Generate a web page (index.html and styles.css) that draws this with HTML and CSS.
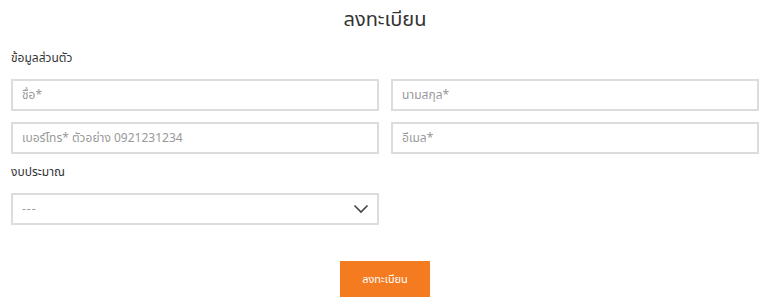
FILE: index.html
```html
<!DOCTYPE html>
<html lang="th">
<head>
<meta charset="utf-8">
<link rel="stylesheet" href="styles.css">
</head>
<body>
<form class="reg">
  <h1 class="reg-title">ลงทะเบียน</h1>
  <div class="section-label">ข้อมูลส่วนตัว</div>
  <div class="grid">
    <input class="field" type="text" placeholder="ชื่อ*">
    <input class="field" type="text" placeholder="นามสกุล*">
    <input class="field" type="text" placeholder="เบอร์โทร* ตัวอย่าง 0921231234">
    <input class="field" type="text" placeholder="อีเมล*">
  </div>
  <div class="section-label budget">งบประมาณ</div>
  <div class="grid">
    <div class="select">
      <span class="select-value">---</span>
      <svg class="chev" width="16" height="10" viewBox="0 0 16 10"><path d="M1.5 1.5 L8 8 L14.5 1.5" fill="none" stroke="#444" stroke-width="1.6"/></svg>
    </div>
  </div>
  <div class="actions">
    <button class="btn" type="button">ลงทะเบียน</button>
  </div>
</form>
</body>
</html>
```
FILE: styles.css
```css
html, body {
  margin: 0;
  padding: 0;
  background: #fff;
}
body {
  font-family: "Noto Sans Thai", "Noto Sans", "Liberation Sans", sans-serif;
  color: #333;
}
.reg {
  padding: 0 9px 0 11px;
}
.reg-title {
  margin: 0;
  height: 40px;
  line-height: 40px;
  text-align: center;
  font-size: 20px;
  font-weight: 400;
  color: #333;
}
.section-label {
  font-size: 12px;
  line-height: 18px;
  margin-top: 9px;
  height: 18px;
  color: #333;
}
.budget {
  margin-top: 9px;
}
.grid {
  display: grid;
  grid-template-columns: 1fr 1fr;
  column-gap: 12px;
  row-gap: 11px;
  margin-top: 12px;
}
.budget + .grid {
  margin-top: 12px;
}
.field, .select {
  box-sizing: border-box;
  height: 32px;
  border: 2px solid #dcdcdc;
  padding: 0 9px;
  font-family: inherit;
  font-size: 12px;
  color: #333;
  background: #fff;
  outline: none;
  margin: 0;
  width: 100%;
}
.field::placeholder {
  color: #999;
}
.select {
  display: flex;
  align-items: center;
  justify-content: space-between;
  padding-right: 8px;
}
.select-value {
  color: #999;
  font-size: 12px;
  letter-spacing: 1px;
}
.actions {
  display: flex;
  justify-content: center;
  margin-top: 36px;
}
.btn {
  width: 90px;
  height: 36px;
  border: none;
  background: #f47b20;
  color: #fff;
  font-family: inherit;
  font-size: 11px;
  padding: 0;
}
```
